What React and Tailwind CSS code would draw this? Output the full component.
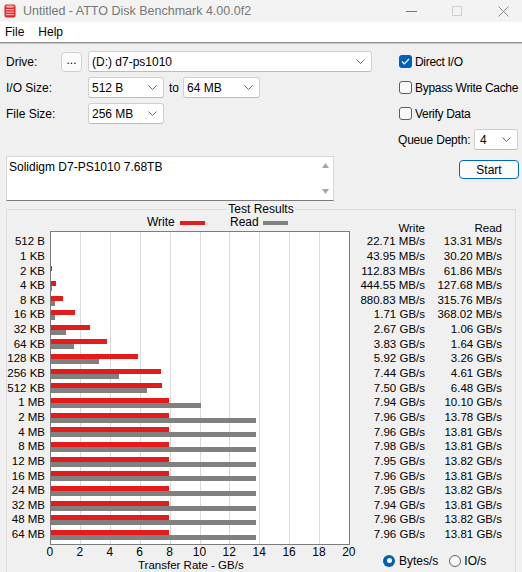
import React from "react";

const rows = [
  ["512 B", 0.02271, 0.01331, "22.71 MB/s", "13.31 MB/s"],
  ["1 KB", 0.04395, 0.0302, "43.95 MB/s", "30.20 MB/s"],
  ["2 KB", 0.11283, 0.06186, "112.83 MB/s", "61.86 MB/s"],
  ["4 KB", 0.44455, 0.12768, "444.55 MB/s", "127.68 MB/s"],
  ["8 KB", 0.88083, 0.31576, "880.83 MB/s", "315.76 MB/s"],
  ["16 KB", 1.71, 0.36802, "1.71 GB/s", "368.02 MB/s"],
  ["32 KB", 2.67, 1.06, "2.67 GB/s", "1.06 GB/s"],
  ["64 KB", 3.83, 1.64, "3.83 GB/s", "1.64 GB/s"],
  ["128 KB", 5.92, 3.26, "5.92 GB/s", "3.26 GB/s"],
  ["256 KB", 7.44, 4.61, "7.44 GB/s", "4.61 GB/s"],
  ["512 KB", 7.5, 6.48, "7.50 GB/s", "6.48 GB/s"],
  ["1 MB", 7.94, 10.1, "7.94 GB/s", "10.10 GB/s"],
  ["2 MB", 7.96, 13.78, "7.96 GB/s", "13.78 GB/s"],
  ["4 MB", 7.96, 13.81, "7.96 GB/s", "13.81 GB/s"],
  ["8 MB", 7.98, 13.81, "7.98 GB/s", "13.81 GB/s"],
  ["12 MB", 7.95, 13.82, "7.95 GB/s", "13.82 GB/s"],
  ["16 MB", 7.96, 13.81, "7.96 GB/s", "13.81 GB/s"],
  ["24 MB", 7.95, 13.82, "7.95 GB/s", "13.82 GB/s"],
  ["32 MB", 7.94, 13.81, "7.94 GB/s", "13.81 GB/s"],
  ["48 MB", 7.96, 13.82, "7.96 GB/s", "13.82 GB/s"],
  ["64 MB", 7.96, 13.81, "7.96 GB/s", "13.81 GB/s"],
];

const SCALE = 14.95;
const bw = (v) => Math.max(0, v * SCALE - 1.2);

function Chevron() {
  return (
    <svg width="9" height="5" viewBox="0 0 9 5" className="shrink-0">
      <polyline points="0.5,0.5 4.5,4.5 8.5,0.5" fill="none" stroke="#6a6a6a" strokeWidth="1" />
    </svg>
  );
}

function Select({ value, w }) {
  return (
    <div
      className={`flex h-[21px] items-center justify-between rounded-[3px] border border-[#d0d0d0] border-b-[#bcbcbc] bg-white pl-[3px] pr-[6px] ${w}`}
    >
      <span>{value}</span>
      <Chevron />
    </div>
  );
}

function Checkbox({ checked, label }) {
  return (
    <div className="flex h-[21px] items-center whitespace-nowrap">
      {checked ? (
        <div className="ml-[1px] flex h-[13px] w-[13px] shrink-0 items-center justify-center rounded-[3px] bg-[#005fb8]">
          <svg width="9" height="7" viewBox="0 0 9 7">
            <polyline points="1,3.5 3.3,5.8 8,1" fill="none" stroke="#fff" strokeWidth="1.2" />
          </svg>
        </div>
      ) : (
        <div className="ml-[1px] h-[13px] w-[13px] shrink-0 rounded-[3px] border border-[#5e5e5e] bg-[#f8f8f8]" />
      )}
      <span className="ml-[3px] tracking-[-0.3px]">{label}</span>
    </div>
  );
}

export default function App() {
  return (
    <div className="h-[572px] w-[522px] overflow-hidden bg-[#f0f0f0] font-['Liberation_Sans',Arial,sans-serif] text-[12px] leading-none text-black">
      {/* Title bar */}
      <div className="flex h-[22px] items-center bg-[#f3f3f3]">
        <svg width="12" height="14" viewBox="0 0 12 14" className="ml-[4px]">
          <rect x="0.5" y="0.5" width="11" height="13" rx="2" fill="#e2262b" />
          <ellipse cx="6" cy="2.6" rx="4.3" ry="1.4" fill="#f6a0a0" />
          <rect x="2" y="5" width="8" height="1.2" fill="#f7b4b4" />
          <rect x="2" y="7.5" width="8" height="1.2" fill="#f7b4b4" />
          <rect x="2" y="10" width="8" height="1.2" fill="#f7b4b4" />
        </svg>
        <span className="ml-[7px] text-[12.5px] text-[#777]">Untitled - ATTO Disk Benchmark 4.00.0f2</span>
        <div className="ml-auto flex h-full items-center">
          <div className="mr-[35px] h-[1px] w-[11px] bg-[#777]" />
          <div className="mr-[36px] h-[10px] w-[10px] border border-[#cfcfcf]" />
          <svg width="11" height="11" viewBox="0 0 11 11" className="mr-[13px]">
            <line x1="0.5" y1="0.5" x2="10.5" y2="10.5" stroke="#888" strokeWidth="1" />
            <line x1="10.5" y1="0.5" x2="0.5" y2="10.5" stroke="#888" strokeWidth="1" />
          </svg>
        </div>
      </div>
      {/* Menu bar */}
      <div className="flex h-[20px] items-center bg-white">
        <span className="ml-[5px]">File</span>
        <span className="ml-[14px]">Help</span>
      </div>
      <div className="h-[1px] bg-[#8e8e8e]" />
      <div className="h-[1px] bg-[#c9c9c9]" />

      {/* Controls */}
      <div className="flex">
        <div className="w-[398px] shrink-0 pl-[6px] pt-[7px]">
          <div className="flex h-[21px] items-center">
            <span className="w-[55px]">Drive:</span>
            <div className="flex h-[20px] w-[21px] items-center justify-center rounded-[4px] border border-[#d0d0d0] bg-[#fbfbfb] pb-[3px]">
              ...
            </div>
            <div className="ml-[6px]">
              <Select value="(D:) d7-ps1010" w="w-[284px]" />
            </div>
          </div>
          <div className="mt-[5px] flex h-[21px] items-center">
            <span className="w-[82px]">I/O Size:</span>
            <Select value="512 B" w="w-[76px]" />
            <span className="ml-[5px] w-[14px]">to</span>
            <Select value="64 MB" w="w-[77px]" />
          </div>
          <div className="mt-[5px] flex h-[21px] items-center">
            <span className="w-[82px]">File Size:</span>
            <Select value="256 MB" w="w-[76px]" />
          </div>
          <div className="mt-[32px] flex h-[45px] w-[328px] border border-[#d8d8d8] border-b-[#7a7a7a] bg-white">
            <span className="ml-[2px] mt-[4px] flex-1">Solidigm D7-PS1010 7.68TB</span>
            <div className="flex w-[16px] flex-col items-center justify-between py-[6px]">
              <svg width="7" height="5" viewBox="0 0 7 5">
                <polygon points="3.5,0 7,5 0,5" fill="#a6a6a6" />
              </svg>
              <svg width="7" height="5" viewBox="0 0 7 5">
                <polygon points="0,0 7,0 3.5,5" fill="#a6a6a6" />
              </svg>
            </div>
          </div>
        </div>
        <div className="min-w-0 flex-1 pt-[7px]">
          <Checkbox checked label="Direct I/O" />
          <div className="mt-[5px]">
            <Checkbox label="Bypass Write Cache" />
          </div>
          <div className="mt-[5px]">
            <Checkbox label="Verify Data" />
          </div>
          <div className="mt-[5px] flex h-[21px] items-center">
            <span className="w-[76px] whitespace-nowrap tracking-[-0.2px]">Queue Depth:</span>
            <Select value="4" w="w-[44px] pl-[5px]" />
          </div>
          <div className="ml-[61px] mt-[10px] flex h-[19px] w-[60px] items-center justify-center rounded-[4px] border border-[#0067c0] bg-[#fbfbfb]">
            Start
          </div>
        </div>
      </div>

      {/* Test Results group */}
      <div className="relative ml-[6px] mt-[8px] h-[400px] w-[510px] border border-[#dcdcdc]">
        <span className="absolute left-1/2 top-[-6px] -translate-x-1/2 bg-[#f0f0f0] px-[2px] leading-[11px]">Test Results</span>
        <div className="flex">
          {/* Chart column */}
          <div className="w-[348px]">
            <div className="mt-[7px] flex h-[11px] items-center leading-[11px]">
              <span className="ml-[140px] w-[26px]">Write</span>
              <div className="ml-[7px] h-[4px] w-[25px] bg-[#e21c1c]" />
              <span className="ml-[25px] w-[33px]">Read</span>
              <div className="h-[4px] w-[25px] bg-[#808080]" />
            </div>
            <div className="mt-[3px] flex">
              <div className="w-[38px] pt-[3.7px] text-right text-[11.5px]">
                {rows.map((r) => (
                  <div key={r[0]} className="flex h-[14.65px] items-center justify-end">
                    {r[0]}
                  </div>
                ))}
              </div>
              <div className="relative ml-[5px] h-[313.5px] w-[300px] border border-[#7c7c7c] bg-white pt-[2.7px]">
                <div className="pointer-events-none absolute inset-0">
                  {[1, 2, 3, 4, 5, 6, 7, 8, 9].map((i) => (
                    <div
                      key={i}
                      className="absolute bottom-0 top-0 w-[1px] bg-[#dadada]"
                      style={{ left: i * 29.9 - 1 }}
                    />
                  ))}
                </div>
                {rows.map((r) => (
                  <div key={r[0]} className="relative flex h-[14.65px] flex-col justify-center">
                    <div className="h-[5px] bg-[#e21c1c]" style={{ width: bw(r[1]) }} />
                    <div className="h-[5px] bg-[#808080]" style={{ width: bw(r[2]) }} />
                  </div>
                ))}
              </div>
            </div>
            <div className="ml-[28px] mt-[1.5px] flex h-[12px] items-center text-[12px]">
              {[0, 2, 4, 6, 8, 10, 12, 14, 16, 18, 20].map((n) => (
                <span key={n} className="w-[29.9px] shrink-0 text-center">
                  {n}
                </span>
              ))}
            </div>
            <div className="ml-[131px] mt-[2px] h-[13px] text-[11.5px]">Transfer Rate - GB/s</div>
          </div>
          {/* Values column */}
          <div className="text-[11.5px]">
            <div className="mt-[12px] grid h-[12.7px] grid-cols-[70px_77px] items-center text-right">
              <span>Write</span>
              <span>Read</span>
            </div>
            {rows.map((r) => (
              <div key={r[0]} className="grid h-[14.65px] grid-cols-[70px_77px] items-center text-right">
                <span>{r[3]}</span>
                <span>{r[4]}</span>
              </div>
            ))}
            <div className="ml-[28px] mt-[12px] flex h-[13px] items-center text-[12px]">
              <div className="flex h-[12px] w-[12px] items-center justify-center rounded-full bg-[#005fb8]">
                <div className="h-[5px] w-[5px] rounded-full bg-white" />
              </div>
              <span className="ml-[4px]">Bytes/s</span>
              <div className="ml-[11px] h-[12px] w-[12px] rounded-full border border-[#5e5e5e] bg-[#f8f8f8]" />
              <span className="ml-[3px]">IO/s</span>
            </div>
          </div>
        </div>
      </div>
    </div>
  );
}
